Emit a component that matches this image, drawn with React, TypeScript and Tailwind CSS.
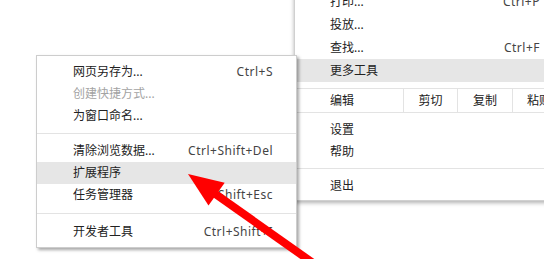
import React from "react";

type Item = { label: string; keys?: string; disabled?: boolean; active?: boolean };

const subTop: Item[] = [
  { label: "网页另存为...", keys: "Ctrl+S" },
  { label: "创建快捷方式...", disabled: true },
  { label: "为窗口命名..." },
];
const subMid: Item[] = [
  { label: "清除浏览数据...", keys: "Ctrl+Shift+Del" },
  { label: "扩展程序", active: true },
  { label: "任务管理器", keys: "Shift+Esc" },
];
const mainTop: Item[] = [
  { label: "打印...", keys: "Ctrl+P" },
  { label: "投放..." },
  { label: "查找...", keys: "Ctrl+F" },
  { label: "更多工具", active: true },
];

function SubRow({ item }: { item: Item }) {
  return (
    <div
      className={`flex h-[22px] items-center justify-between pl-[36px] pr-[23px] ${
        item.active ? "bg-[#e6e6e6]" : ""
      }`}
    >
      <span className={item.disabled ? "text-[#a3a3a3]" : "text-[#222]"}>{item.label}</span>
      {item.keys && <span className="tracking-[0.5px] text-[#444]">{item.keys}</span>}
    </div>
  );
}

function MainRow({ item, h = "h-[23px]" }: { item: Item; h?: string }) {
  return (
    <div
      className={`flex ${h} items-center justify-between pl-[35px] pr-[25px] ${
        item.active ? "bg-[#e6e6e6]" : ""
      }`}
    >
      <span className="text-[#222]">{item.label}</span>
      {item.keys && <span className="tracking-[0.5px] text-[#444]">{item.keys}</span>}
    </div>
  );
}

function Sep({ cls }: { cls: string }) {
  return (
    <div className={cls}>
      <div className="h-px bg-[#e3e3e3]" />
    </div>
  );
}

export default function App() {
  return (
    <div className="relative h-[259px] w-[544px] overflow-hidden bg-white font-['Noto_Sans','Noto_Sans_CJK_SC',sans-serif] text-[12px] leading-none">
      {/* Chrome main menu */}
      <div className="absolute left-[294px] top-[-14px] w-[272px] border border-[#d0d0d0] bg-white pb-[3px] pt-[3px] shadow-[0_2px_4px_rgba(0,0,0,0.3)]">
        {mainTop.map((it) => (
          <MainRow key={it.label} item={it} />
        ))}
        <div className="mt-[6px] flex h-[25px] border-y border-[#e3e3e3] text-[#222]">
          <div className="flex w-[108px] items-center pl-[35px]">编辑</div>
          <div className="flex w-[54px] items-center justify-center border-l border-[#e3e3e3]">剪切</div>
          <div className="flex w-[55px] items-center justify-center border-l border-[#e3e3e3]">复制</div>
          <div className="flex flex-1 items-center justify-center border-l border-[#e3e3e3]">粘贴</div>
        </div>
        <div className="mt-[6px]">
          <MainRow item={{ label: "设置" }} h="h-[22px]" />
          <MainRow item={{ label: "帮助" }} h="h-[22px]" />
        </div>
        <Sep cls="pb-[6px] pt-[5px]" />
        <MainRow item={{ label: "退出" }} h="h-[22px]" />
      </div>

      {/* More tools submenu */}
      <div className="absolute left-[36px] top-[55px] w-[261px] border border-[#cdcdcd] bg-white pb-[4px] pt-[5px] shadow-[2px_2px_3px_rgba(0,0,0,0.35)]">
        {subTop.map((it) => (
          <SubRow key={it.label} item={it} />
        ))}
        <Sep cls="py-[6px]" />
        {subMid.map((it) => (
          <SubRow key={it.label} item={it} />
        ))}
        <Sep cls="pb-[7px] pt-[7px]" />
        <SubRow item={{ label: "开发者工具", keys: "Ctrl+Shift+I" }} />
      </div>

      {/* red arrow */}
      <svg className="pointer-events-none absolute left-0 top-0" width="544" height="259" viewBox="0 0 544 259">
        <polygon points="188,174 208.5,205.6 224.7,182.8" fill="#ff0000" />
        <line x1="214" y1="193" x2="330" y2="275" stroke="#ff0000" strokeWidth="8" />
      </svg>
    </div>
  );
}
